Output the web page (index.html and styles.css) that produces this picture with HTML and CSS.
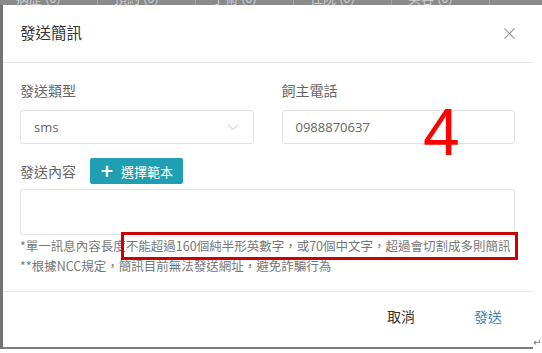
FILE: index.html
```html
<!DOCTYPE html>
<html lang="zh-Hant">
<head>
  <meta charset="UTF-8" />
  <meta name="viewport" content="width=device-width, initial-scale=1.0" />
  <title>發送簡訊</title>
  <link rel="stylesheet" href="styles.css">
</head>
<body>
  <div class="topbar">
    <span class="col">病歷 (0)</span>
    <span class="col">預約 (0)</span>
    <span class="col">手術 (0)</span>
    <span class="col">住院 (0)</span>
    <span class="col">美容 (0)</span>
  </div>

  <div class="frame">
    <div class="modal">
      <div class="modal-header">
        <h1>發送簡訊</h1>
        <svg class="close" width="11" height="11" viewBox="0 0 11 11">
          <path d="M0.5 0.5L10.5 10.5M10.5 0.5L0.5 10.5" stroke="#9a9a9a" stroke-width="1.1" fill="none" />
        </svg>
      </div>

      <div class="modal-body">
        <div class="row">
          <div class="field">
            <label>發送類型</label>
            <div class="select">
              <span>sms</span>
              <svg width="12" height="8" viewBox="0 0 12 8">
                <path d="M1 1.5L6 6.5L11 1.5" stroke="#c4c4c4" stroke-width="1" fill="none" />
              </svg>
            </div>
          </div>
          <div class="field">
            <label>飼主電話</label>
            <div class="input">0988870637</div>
          </div>
        </div>

        <div class="content-head">
          <label>發送內容</label>
          <button class="btn-template"><span class="plus">+</span>選擇範本</button>
        </div>
        <div class="textarea"></div>

        <p class="note">*單一訊息內容長度不能超過160個純半形英數字，或70個中文字，超過會切割成多則簡訊</p>
        <p class="note">**根據NCC規定，簡訊目前無法發送網址，避免詐騙行為</p>
      </div>

      <div class="modal-footer">
        <button class="btn-text">取消</button>
        <button class="btn-text primary">發送</button>
      </div>
    </div>

    <div class="mark-box"></div>
    <div class="mark-num">4</div>
  </div>
  <span class="return">↵</span>
</body>
</html>
```

FILE: styles.css
```css
* {
  box-sizing: border-box;
  margin: 0;
  padding: 0;
}

body {
  background: #ffffff;
  font-family: "Noto Sans CJK TC", "Noto Sans", sans-serif;
  color: #333;
  width: 542px;
  height: 353px;
  overflow: hidden;
  position: relative;
}

.topbar {
  height: 5px;
  background: #8a8a8a;
  display: flex;
  overflow: hidden;
}

.topbar .col {
  width: 82px;
  margin-left: 16px;
  font-size: 13px;
  line-height: 13px;
  margin-top: -9px;
  color: #cfcfcf;
  border-right: 1px solid #a5a5a5;
}

.frame {
  position: relative;
  width: 533px;
  height: 344px;
  border-left: 3px solid #737373;
  border-bottom: 2px solid #7d7d7d;
}

.modal {
  background: #fff;
  height: 100%;
  display: flex;
  flex-direction: column;
}

.modal-header {
  height: 58px;
  padding: 0 18px 0 17px;
  display: flex;
  align-items: center;
  justify-content: space-between;
  border-bottom: 1px solid #e9e9e9;
}

.modal-header h1 {
  font-size: 15.5px;
  font-weight: 400;
  line-height: 20px;
  margin-top: -3px;
  color: #333;
}

.modal-body {
  padding: 17px 18px 15px 17px;
  border-bottom: 1px solid #e9e9e9;
}

.row {
  display: flex;
  gap: 28px;
}

.field {
  flex: 1;
}

label {
  display: block;
  font-size: 14px;
  line-height: 20px;
  color: #666;
}

.field label {
  margin-bottom: 10px;
}

.select,
.input {
  height: 34px;
  border: 1px solid #e2e2e2;
  border-radius: 3px;
  display: flex;
  align-items: center;
  padding: 0 14px 0 13px;
  font-family: "Open Sans", "Noto Sans", sans-serif;
  font-size: 13px;
  color: #666;
}

.select {
  justify-content: space-between;
}

.content-head {
  display: flex;
  align-items: center;
  gap: 14px;
  margin-top: 14px;
}

.btn-template {
  height: 26px;
  width: 93px;
  border: none;
  border-radius: 2px;
  background: #1f9fb1;
  color: #fff;
  font-family: "Noto Sans CJK TC", sans-serif;
  font-size: 13px;
  display: flex;
  align-items: center;
  justify-content: center;
  gap: 7px;
}

.btn-template .plus {
  font-family: "DejaVu Sans", sans-serif;
  font-size: 17px;
  font-weight: 700;
  line-height: 1;
}

.textarea {
  margin-top: 5px;
  height: 46px;
  border: 1px solid #e2e2e2;
  border-radius: 3px;
}

.note {
  font-size: 12.5px;
  line-height: 20px;
  color: #777;
  white-space: nowrap;
}

.note:first-of-type {
  margin-top: 1px;
}

.modal-footer {
  flex: 1;
  display: flex;
  justify-content: flex-end;
  align-items: flex-start;
  padding: 14px 15px 0 0;
}

.btn-text {
  background: none;
  border: none;
  font-family: "Noto Sans CJK TC", sans-serif;
  font-size: 14px;
  line-height: 20px;
  color: #333;
  margin-right: 59px;
}

.btn-text.primary {
  color: #3b86b3;
  margin-right: 16px;
}

/* annotation overlay */
.mark-box {
  position: absolute;
  left: 118px;
  top: 227px;
  width: 397px;
  height: 28px;
  border: 3px solid #d10000;
}

.mark-num {
  position: absolute;
  left: 420px;
  top: 91px;
  font-family: "Liberation Sans", sans-serif;
  font-size: 66px;
  line-height: 72px;
  color: #ff0000;
}

.return {
  position: absolute;
  left: 533px;
  top: 337px;
  font-family: "DejaVu Sans", sans-serif;
  font-size: 10px;
  color: #777;
}
```
